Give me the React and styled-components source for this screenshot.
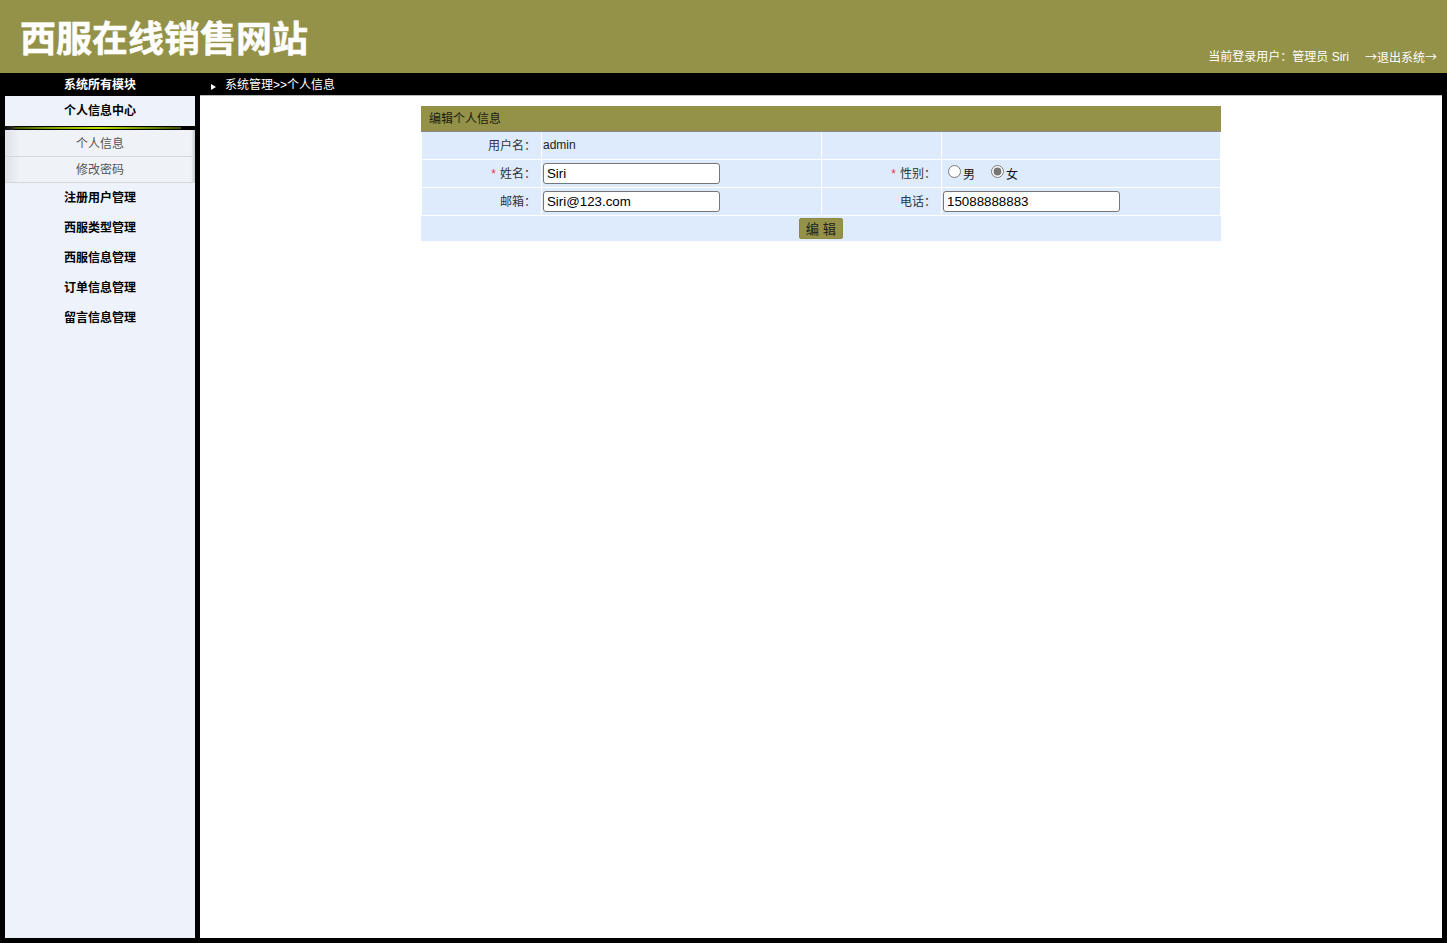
import React from "react";
import styled, { createGlobalStyle } from "styled-components";

const olive = "#949148";
const fontStack = `"Liberation Sans", "Noto Sans CJK SC", sans-serif`;

const GlobalStyle = createGlobalStyle`
  html, body {
    margin: 0;
    padding: 0;
    height: 100%;
    background: #000;
    font-family: ${fontStack};
    font-size: 12px;
    color: #000;
  }
`;

const Page = styled.div`
  width: 1447px;
  height: 943px;
  overflow: hidden;
  display: flex;
  flex-direction: column;
  background: #000;
`;

const Header = styled.header`
  height: 73px;
  background: ${olive};
  display: flex;
  justify-content: space-between;
  align-items: flex-end;
  color: #fff;
`;

const SiteTitle = styled.h1`
  margin: 0 0 10px 20px;
  font-size: 36px;
  line-height: 46px;
  font-weight: 700;
  -webkit-text-stroke: 0.5px #fff;
`;

const UserInfo = styled.div`
  display: flex;
  gap: 16px;
  margin: 0 10px 8px 0;
  line-height: 16px;
`;

const ExitLink = styled.span`
  font-family: "Noto Sans CJK SC", sans-serif;
`;

const TopBar = styled.div`
  height: 23px;
  box-sizing: border-box;
  padding-bottom: 2px;
  display: flex;
  align-items: center;
  color: #fff;
`;

const BarTitle = styled.div`
  width: 200px;
  margin-bottom: 1px;
  text-align: center;
  font-weight: 700;
`;

const Crumbs = styled.div`
  display: flex;
  align-items: center;
  padding-left: 11px;
`;

const CrumbArrow = styled.svg`
  width: 6px;
  height: 6px;
  margin: 7px 8px 0 0;
`;

const Body = styled.div`
  flex: 1;
  display: flex;
  gap: 5px;
  padding: 0 5px 5px;
  min-height: 0;
`;

const Sidebar = styled.aside`
  width: 190px;
  background: #edf2fb;
`;

const MenuHead = styled.div`
  height: 30px;
  line-height: 30px;
  text-align: center;
  font-weight: 700;
`;

const MenuRule = styled.div`
  height: 4px;
  background:
    linear-gradient(90deg, #3f5200 0, #7f9f00 20%, #c0e400 50%, #7f9f00 75%, #3f4f00 100%) 9px 1px / 167px 2px no-repeat,
    linear-gradient(90deg, #0c0c0c 0, #2e2e2e 5%, #000 5%, #000 100%);
`;

const SubMenu = styled.div`
  padding-top: 1px;
  background: linear-gradient(90deg, #dfe3e8 0, #eff3f7 8%, #eff3f7 98%, #c4c9cf 100%);
`;

const SubItem = styled.div`
  height: 25px;
  line-height: 26px;
  text-align: center;
  color: #555;
  border-bottom: 1px solid #d3d8df;
`;

const Main = styled.main`
  flex: 1;
  background: #fff;
  padding-top: 10px;
  border-top: 1px solid #bbb;
  margin-top: -1px;
  display: flex;
  justify-content: center;
  align-items: flex-start;
`;

const FormTable = styled.table`
  width: 800px;
  height: 135px;
  border-collapse: separate;
  border-spacing: 0;
  table-layout: fixed;
  background: #deebfd;
`;

const Col = styled.col`
  width: ${(p) => p.$width}px;
`;

const Caption = styled.th`
  height: 26px;
  box-sizing: border-box;
  padding: 0 0 2px 8px;
  background: ${olive};
  text-align: left;
  font-weight: 400;
  color: #1c1c10;
  border-bottom: 1px solid #888;
`;

const Row = styled.tr`
  height: 28px;
`;

const LabelCell = styled.td`
  box-sizing: border-box;
  padding: 0 5px 3px 0;
  text-align: right;
  color: #333;
  border-style: solid;
  border-color: #fff;
  border-width: 0 1px 1px 0;

  &:first-child {
    border-left-width: 1px;
  }
`;

const ValueCell = styled.td`
  box-sizing: border-box;
  padding: 0 0 0 1px;
  color: #222;
  border-style: solid;
  border-color: #fff;
  border-width: 0 1px 1px 0;
`;

const PlainValue = styled.span`
  display: block;
  margin-bottom: 2px;
`;

const ActionCell = styled.td`
  height: 25px;
  padding: 0;
  text-align: center;
`;

const Star = styled.span`
  color: #e8344e;
  margin-right: 4px;
`;

const TextInput = styled.input`
  display: block;
  box-sizing: border-box;
  width: 177px;
  height: 21px;
  padding: 1px 3px;
  border: 1px solid #767676;
  border-radius: 3px;
  background: #fff;
  font-family: ${fontStack};
  font-size: 13.33px;
  color: #000;
`;

const RadioGroup = styled.div`
  display: flex;
  gap: 16px;
  padding-left: 5px;
`;

const RadioLabel = styled.label`
  display: flex;
  align-items: center;
  gap: 2px;
  color: #111;
`;

const Radio = styled.input`
  width: 13px;
  height: 13px;
  margin: 0 0 4px;
  accent-color: #767676;
`;

const SubmitButton = styled.button`
  display: inline-block;
  vertical-align: middle;
  width: 44px;
  height: 21px;
  padding: 0;
  border: 1px solid #8d8a3f;
  border-radius: 2px;
  background: ${olive};
  font-family: ${fontStack};
  font-size: 13.33px;
  color: #222;
`;

const menus = ["注册用户管理", "西服类型管理", "西服信息管理", "订单信息管理", "留言信息管理"];

export default function App() {
  return (
    <>
      <GlobalStyle />
      <Page>
        <Header>
          <SiteTitle>西服在线销售网站</SiteTitle>
          <UserInfo>
            <span>当前登录用户：管理员 Siri</span>
            <ExitLink>→退出系统→</ExitLink>
          </UserInfo>
        </Header>
        <TopBar>
          <BarTitle>系统所有模块</BarTitle>
          <Crumbs>
            <CrumbArrow viewBox="0 0 6 6">
              <path d="M0 0 L5 3 L0 6 Z" fill="#fff" />
            </CrumbArrow>
            系统管理&gt;&gt;个人信息
          </Crumbs>
        </TopBar>
        <Body>
          <Sidebar>
            <MenuHead>个人信息中心</MenuHead>
            <MenuRule />
            <SubMenu>
              <SubItem>个人信息</SubItem>
              <SubItem>修改密码</SubItem>
            </SubMenu>
            {menus.map((m) => (
              <MenuHead key={m}>{m}</MenuHead>
            ))}
          </Sidebar>
          <Main>
            <FormTable>
              <colgroup>
                <Col $width={121} />
                <Col $width={280} />
                <Col $width={120} />
                <Col $width={279} />
              </colgroup>
              <thead>
                <tr>
                  <Caption colSpan={4}>编辑个人信息</Caption>
                </tr>
              </thead>
              <tbody>
                <Row>
                  <LabelCell>用户名：</LabelCell>
                  <ValueCell>
                    <PlainValue>admin</PlainValue>
                  </ValueCell>
                  <LabelCell />
                  <ValueCell />
                </Row>
                <Row>
                  <LabelCell>
                    <Star>*</Star>姓名：
                  </LabelCell>
                  <ValueCell>
                    <TextInput defaultValue="Siri" />
                  </ValueCell>
                  <LabelCell>
                    <Star>*</Star>性别：
                  </LabelCell>
                  <ValueCell>
                    <RadioGroup>
                      <RadioLabel>
                        <Radio type="radio" name="sex" />男
                      </RadioLabel>
                      <RadioLabel>
                        <Radio type="radio" name="sex" defaultChecked />女
                      </RadioLabel>
                    </RadioGroup>
                  </ValueCell>
                </Row>
                <Row>
                  <LabelCell>邮箱：</LabelCell>
                  <ValueCell>
                    <TextInput defaultValue="Siri@123.com" />
                  </ValueCell>
                  <LabelCell>电话：</LabelCell>
                  <ValueCell>
                    <TextInput defaultValue="15088888883" />
                  </ValueCell>
                </Row>
                <tr>
                  <ActionCell colSpan={4}>
                    <SubmitButton type="button">编 辑</SubmitButton>
                  </ActionCell>
                </tr>
              </tbody>
            </FormTable>
          </Main>
        </Body>
      </Page>
    </>
  );
}
